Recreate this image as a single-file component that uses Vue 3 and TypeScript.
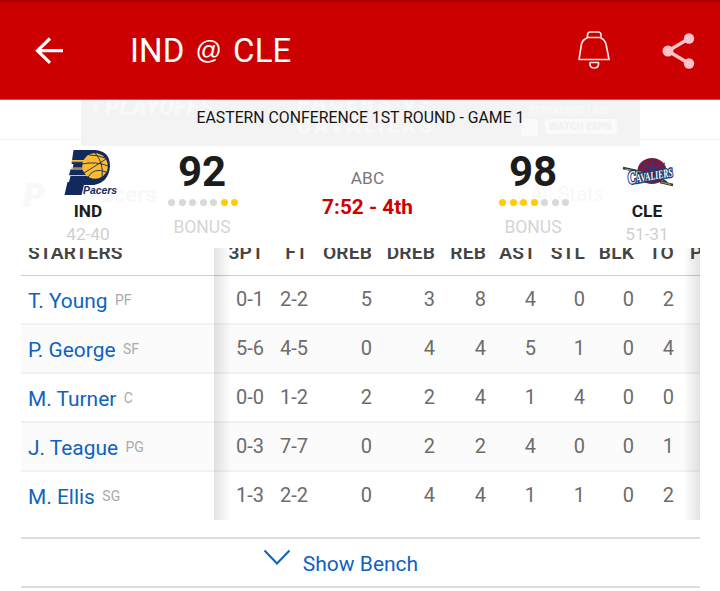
<script setup lang="ts">
interface Player { name: string; pos: string; stats: string[] }

const columns: string[] = ['3PT', 'FT', 'OREB', 'DREB', 'REB', 'AST', 'STL', 'BLK', 'TO', 'PF']
const players: Player[] = [
  { name: 'T. Young', pos: 'PF', stats: ['0-1', '2-2', '5', '3', '8', '4', '0', '0', '2'] },
  { name: 'P. George', pos: 'SF', stats: ['5-6', '4-5', '0', '4', '4', '5', '1', '0', '4'] },
  { name: 'M. Turner', pos: 'C', stats: ['0-0', '1-2', '2', '2', '4', '1', '4', '0', '0'] },
  { name: 'J. Teague', pos: 'PG', stats: ['0-3', '7-7', '0', '2', '2', '4', '0', '0', '1'] },
  { name: 'M. Ellis', pos: 'SG', stats: ['1-3', '2-2', '0', '4', '4', '1', '1', '0', '2'] },
]
</script>

<template>
  <div class="screen">
    <header class="bar">
      <svg class="back" width="30" height="30" viewBox="0 0 30 30"><path d="M16 2.500 3.500 14.700l12.500 12.200M4 14.700h25" /></svg>
      <h1>IND <span>@</span> CLE</h1>
      <svg class="bell" width="34" height="40" viewBox="0 0 34 40">
        <path d="M8 7.500Q4.500 9 3.500 13L1 28.500H31L28 13Q26.500 8.500 23 7V4Q23 1 20 1H12.500Q9.500 1 9.500 4V6.500H22.500M9.500 6.500 8 7.500" />
        <path d="M12 31.500H20.500V33Q20.500 37 16.200 37T12 33Z" />
      </svg>
      <svg class="share" width="34" height="38" viewBox="0 0 34 38">
        <path d="M27 6.500 6 19 27 31.500" /><circle cx="27" cy="6.500" r="5.200" /><circle cx="6" cy="19" r="5.500" /><circle cx="27" cy="31.500" r="5.200" />
      </svg>
    </header>

    <div class="round">
      <div class="promo">
        <span class="p1">◐PLAYOFFS</span>
        <span class="p2">PACERS VS<br />CAVALIERS</span>
        <span class="p3">STREAMING LIVE</span>
        <span class="p4"><i></i><b>WATCH ESPN</b></span>
      </div>
      <p>EASTERN CONFERENCE 1ST ROUND - GAME 1</p>
    </div>

    <section class="score">
      <span class="ghost g1"><b>P</b></span><span class="ghost g2">Pacers</span><span class="ghost g3">All Stats</span>
      <div class="team">
        <svg class="logo" width="56" height="48" viewBox="0 0 56 48">
          <path d="M9.500 0H31Q46 1 46 16 45 32 30 35H20L17.500 45H0.500L3.500 32H5L6.800 25H5L6.700 19H8.500L9.500 14H7.500Z" fill="#11295c" />
          <circle cx="31" cy="16" r="12.800" fill="#fdbb30" />
          <path d="M8 10.500H30M7 18H30M5.500 25.500H28" stroke="#fdbb30" stroke-width="1.200" fill="none" />
          <path d="M8 11.700H19M7 19.200H19" stroke="#e8edf4" stroke-width=".7" />
          <path d="M18 14Q32 11 44 16M20 23Q33 15 42 9M31 3Q40 13 38 27M24 27Q30 17 42 22M25 5Q34 5 41 8" fill="none" stroke="#11295c" stroke-width=".9" />
          <text x="19" y="44" textLength="34" lengthAdjust="spacingAndGlyphs">Pacers</text>
        </svg>
        <strong>IND</strong><span class="rec">42-40</span>
      </div>
      <div class="points">
        <strong>92</strong>
        <div class="dots"><i v-for="n in 7" :key="n" :class="{ on: n > 5 }"></i></div>
        <span>BONUS</span>
      </div>
      <div class="clock"><span>ABC</span><strong>7:52 - 4th</strong></div>
      <div class="points">
        <strong>98</strong>
        <div class="dots"><i v-for="n in 7" :key="n" :class="{ on: n < 5 }"></i></div>
        <span>BONUS</span>
      </div>
      <div class="team">
        <svg class="logo cavs" width="56" height="48" viewBox="0 0 56 48">
          <ellipse cx="30" cy="21" rx="14.500" ry="13" fill="#7b1742" />
          <path d="M16 20Q30 13 45 20M18 29Q30 18 43 13M30 8V34M20 12Q30 22 41 30" fill="none" stroke="#274275" stroke-width="1.200" />
          <path d="M1 18 24 23M38 32 51 35M41 30 46 34" fill="none" stroke="#2a3530" stroke-width="2.600" />
          <path d="M3 19 24 23M39 32 49 34.500" fill="none" stroke="#b59a45" stroke-width="1.200" />
          <text x="7" y="34" transform="rotate(-10 7 34)" textLength="45" lengthAdjust="spacingAndGlyphs"><tspan font-size="18">C</tspan>AVALIERS</text>
        </svg>
        <strong>CLE</strong><span class="rec">51-31</span>
      </div>
    </section>

    <main>
      <div class="box">
        <div class="names">
          <div class="head">STARTERS</div>
          <div v-for="p in players" :key="p.name" class="row"><a>{{ p.name }}</a><small>{{ p.pos }}</small></div>
        </div>
        <div class="stats">
          <div class="head grid"><span v-for="c in columns" :key="c">{{ c }}</span></div>
          <div v-for="p in players" :key="p.name" class="row grid"><span v-for="(s, i) in p.stats" :key="i">{{ s }}</span></div>
        </div>
      </div>
      <button class="bench">
        <svg width="28" height="17" viewBox="0 0 28 17"><path d="M1.500 1.500 14 14.500 26.500 1.500" /></svg>
        <span>Show Bench</span>
      </button>
    </main>
  </div>
</template>

<style>
body { background: #fff; }
</style>

<style scoped>
* { box-sizing: border-box; }
.screen { width: 720px; height: 591px; overflow: hidden; background: #fff; font-family: Roboto, "Liberation Sans", sans-serif; }
svg { display: block; flex: none; }
.bar { display: flex; align-items: center; height: 100px; padding: 0 24px 0 34px; background: #c00; border-top: 2px solid #a90000; border-bottom: 1px solid #e04a4a; }
.back { fill: none; stroke: #fff; stroke-width: 3.2; }
.bar h1 { margin: 0 auto 0 66px; font-size: 33px; font-weight: 400; line-height: 40px; color: #fff; white-space: nowrap; letter-spacing: .1px; }
.bar h1 span { display: inline-block; width: 32px; font: 26px/26px "Liberation Sans", sans-serif; text-align: center; vertical-align: 3px; }
.bell { margin-right: 50px; fill: none; stroke: #ffe2df; stroke-width: 1.7; stroke-linejoin: round; }
.share { fill: #ffc4cb; }
.share path { fill: none; stroke: #ffc4cb; stroke-width: 3.4; }
.round { position: relative; height: 40px; border-bottom: 1px solid #f0f0f0; }
.round p { position: relative; margin: 0; padding: 8px 0 0 1px; font-size: 15.8px; line-height: 20px; text-align: center; color: #151515; white-space: nowrap; }
.promo { position: absolute; left: 81px; top: 0; width: 559px; height: 46px; background: #f3f3f3; overflow: hidden; font-weight: 900; color: #f8f8f8; z-index: 0; }
.promo span { position: absolute; white-space: nowrap; }
.p1 { left: 10px; top: -4px; font-size: 23px; line-height: 24px; font-style: italic; }
.p2 { left: 216px; top: -8px; font-size: 21px; line-height: 23px; letter-spacing: 3px; text-align: center; }
.p3 { left: 447px; top: 5px; font-size: 10px; line-height: 12px; }
.promo .p4 { left: 440px; top: 19px; display: flex; gap: 7px; }
.p4 i { width: 17px; height: 17px; border-radius: 4px; background: #fafafa; }
.p4 b { width: 72px; height: 15px; padding-left: 4px; border-radius: 3px; background: #fafafa; color: #f1f1f1; font-size: 10px; line-height: 15px; }
.score { position: relative; display: flex; height: 108px; }
.ghost { position: absolute; color: #f8f8f8; font-weight: 700; line-height: 26px; }
.g1 { left: 23px; top: 42px; font-size: 34px; font-style: italic; }
.g2 { left: 88px; top: 42px; font-size: 22px; }
.g3 { left: 530px; top: 41px; font-size: 20px; font-weight: 400; }
.team { position: relative; display: flex; flex: none; flex-direction: column; align-items: center; width: 96px; padding: 10px 0 0; }
.team:first-of-type { width: 136px; padding-left: 40px; }
.logo { margin-left: 8px; }
.logo text { font: italic 900 11px "Liberation Sans", sans-serif; fill: #11295c; stroke: #fff; stroke-width: .8; paint-order: stroke; }
.cavs { margin-left: 6px; }
.cavs text { font: italic 900 12px "Liberation Serif", serif; fill: #fff; stroke: #183b73; stroke-width: 2.8; }
.team strong { margin-top: 3px; font-size: 17.3px; line-height: 20px; font-weight: 700; color: #1c1c1c; }
.rec { margin-top: 3px; font-size: 17.3px; line-height: 20px; color: #d0d0d0; }
.points { position: relative; display: flex; flex: none; flex-direction: column; align-items: center; width: 132px; }
.points strong { margin-top: 8px; font-size: 42px; line-height: 48px; font-weight: 700; color: #1c1c1c; }
.dots { display: flex; gap: 3.500px; margin: 3px 0 0 2px; }
.dots i { width: 7px; height: 7px; border-radius: 50%; background: #d8d8d8; }
.dots .on { background: #fc0; }
.points span { margin-top: 11px; font-size: 17.5px; line-height: 20px; color: #d5d5d5; }
.clock { position: relative; display: flex; flex: none; flex-direction: column; align-items: center; width: 199px; padding-top: 28px; }
.clock span { font-size: 17.3px; line-height: 20px; color: #777; }
.clock strong { margin-top: 7px; font-size: 20.8px; line-height: 24px; color: #d00000; }
main { padding: 0 20px 0 21px; }
.box { display: flex; height: 272px; overflow: hidden; }
.names { width: 193px; }
.stats { position: relative; flex: 1; overflow: hidden; }
.stats::before, .stats::after { content: ""; position: absolute; top: 0; bottom: 0; left: 0; width: 17px; background: linear-gradient(to right, rgba(0, 0, 0, .11), rgba(0, 0, 0, 0)); z-index: 1; }
.stats::after { left: auto; right: 0; background: linear-gradient(to left, rgba(0, 0, 0, .11), rgba(0, 0, 0, 0)); }
.head { height: 28px; padding-left: 7px; font-size: 19.2px; line-height: 10px; font-weight: 600; letter-spacing: .15px; color: #444; border-bottom: 1px solid #ccc; overflow: hidden; white-space: nowrap; }
.row { height: 49px; border-bottom: 2px solid #f1f1f1; color: #6c6c6c; font-size: 20px; line-height: 47px; }
.row:nth-child(odd) { background: #fbfbfb; }
.row:last-child { border-bottom: 0; }
.names .row { display: flex; gap: 7.5px; padding-left: 7px; white-space: nowrap; line-height: 50px; }
.names a { color: #0e62c0; font-size: 20.900px; }
.names small { font-size: 14px; line-height: 48px; color: #aaa; }
.grid { display: grid; grid-template-columns: 50px 44px 64px 63px 51px 50px 49px 49px 40px 40px; padding-left: 0; text-align: right; }
.head.grid span:last-child { text-align: left; padding-left: 16px; }
.bench { display: flex; justify-content: center; width: 100%; height: 51px; margin-top: 17px; padding: 0 40px 0 0; border: 0 solid #ddd; border-width: 2px 0; background: none; font-family: inherit; font-size: 21px; line-height: 50px; color: #0e62c0; }
.bench svg { margin: 10px 12px 0 0; fill: none; stroke: #0e62c0; stroke-width: 2; }
</style>
